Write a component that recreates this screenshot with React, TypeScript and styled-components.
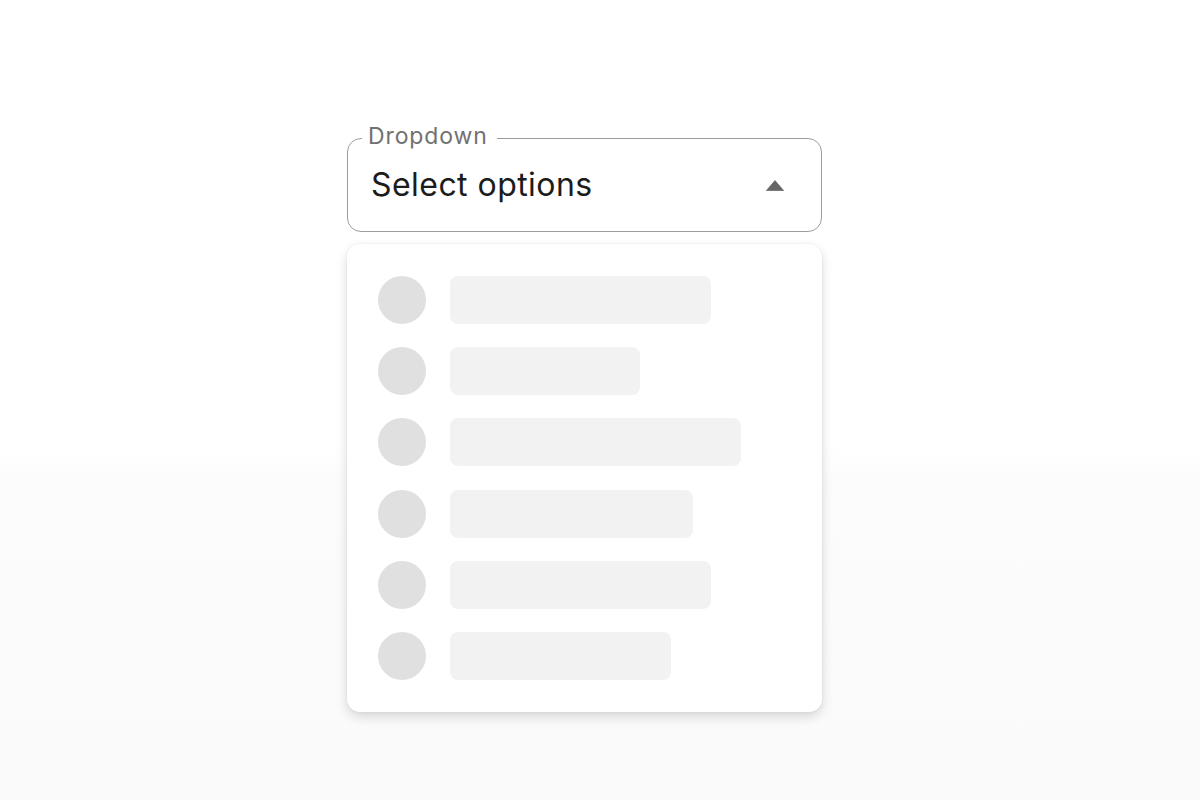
import React from "react";
import styled, { createGlobalStyle } from "styled-components";

const GlobalStyle = createGlobalStyle`
  html, body {
    margin: 0;
    padding: 0;
  }
  body {
    font-family: Inter, "Noto Sans", "Liberation Sans", sans-serif;
    background: #ffffff;
  }
  * { box-sizing: border-box; }
`;

const Page = styled.div`
  min-height: 800px;
  background: linear-gradient(to bottom, #ffffff 0%, #ffffff 56%, #fcfcfc 60%, #fafafa 100%);
  padding: 123.5px 0 0 347px;
`;

const Column = styled.div`
  width: 475px;
  display: flex;
  flex-direction: column;
`;

const Field = styled.fieldset`
  margin: 0;
  padding: 0 14px;
  border: 1px solid #9c9c9c;
  border-radius: 14px;
  width: 475px;
  min-width: 0;
  background: #ffffff;
`;

const Legend = styled.legend`
  padding: 0 9px 5px 6px;
  font-size: 23px;
  line-height: 24px;
  color: #717171;
  letter-spacing: 0.9px;
`;

const ValueRow = styled.div`
  height: 78.5px;
  padding: 0 23px 13.5px 9px;
  display: flex;
  align-items: center;
  justify-content: space-between;
`;

const Value = styled.span`
  font-size: 32px;
  line-height: 1;
  color: #1c1c1c;
  letter-spacing: 0.45px;
`;

const Arrow = styled.svg`
  display: block;
  width: 18px;
  height: 11px;
`;

const Menu = styled.div`
  margin-top: 12px;
  width: 475px;
  padding: 32px 31px;
  border-radius: 13px;
  background: #ffffff;
  box-shadow: 0 5px 12px rgba(0, 0, 0, 0.14), 0 0 3px rgba(0, 0, 0, 0.07);
  display: flex;
  flex-direction: column;
  gap: 23.2px;
`;

const Row = styled.div`
  display: flex;
  align-items: center;
  gap: 23.5px;
`;

const Dot = styled.div`
  width: 48px;
  height: 48px;
  border-radius: 50%;
  background: #e0e0e0;
  flex-shrink: 0;
`;

const Bar = styled.div<{ $w: number }>`
  width: ${(p) => p.$w}px;
  height: 48px;
  border-radius: 8px;
  background: #f2f2f2;
`;

const bars = [261, 190, 291, 243, 261, 221];

export default function App() {
  return (
    <>
      <GlobalStyle />
      <Page>
        <Column>
          <Field>
            <Legend>Dropdown</Legend>
            <ValueRow>
              <Value>Select options</Value>
              <Arrow viewBox="0 0 18 11" aria-hidden="true">
                <path d="M9 0.6 L17.6 10.6 L0.4 10.6 Z" fill="#666666" strokeLinejoin="round" stroke="#666666" strokeWidth="0.8" />
              </Arrow>
            </ValueRow>
          </Field>
          <Menu>
            {bars.map((w, i) => (
              <Row key={i}>
                <Dot />
                <Bar $w={w} />
              </Row>
            ))}
          </Menu>
        </Column>
      </Page>
    </>
  );
}
